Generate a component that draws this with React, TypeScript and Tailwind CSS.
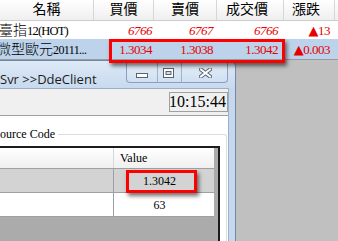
export default function App() {
  const red = "text-[#e60000]";
  return (
    <div className="relative flex h-[241px] w-[338px] flex-col overflow-hidden bg-[#c0c0c0] font-['Liberation_Serif','Noto_Sans_CJK_TC',serif] text-black">
      {/* quote table */}
      <div className="flex flex-col bg-white">
        <div className="flex h-[21px] border-b border-[#cdcdcd] bg-linear-to-b from-white to-[#efefef] text-[14px] leading-none">
          <div className="flex w-[94px] items-center justify-center border-r border-[#d6d6d6]">名稱</div>
          <div className="flex w-[60px] items-center justify-center border-r border-[#d6d6d6]">買價</div>
          <div className="flex w-[63px] items-center justify-center border-r border-[#d6d6d6]">賣價</div>
          <div className="flex w-[67px] items-center justify-center border-r border-[#d6d6d6] pr-[6px]">成交價</div>
          <div className="flex w-[51px] items-center justify-center border-r border-[#d6d6d6] pr-[6px]">漲跌</div>
          <div className="flex-1" />
        </div>
        <div className="flex h-[18px] items-center bg-white leading-none">
          <div className="ml-[-1px] w-[94px] whitespace-nowrap">
            <span className="text-[14px] font-light">臺指</span>
            <span className="text-[12.5px] tracking-[-0.8px]">12(HOT)</span>
          </div>
          <div className={`w-[59px] text-right text-[13px] italic tracking-[-0.5px] ${red}`}>6766</div>
          <div className={`w-[61px] text-right text-[13px] italic tracking-[-0.5px] ${red}`}>6767</div>
          <div className={`w-[65px] text-right text-[13px] italic tracking-[-0.5px] ${red}`}>6766</div>
          <div className={`flex w-[52px] items-center justify-end text-[13px] tracking-[-0.5px] ${red}`}>
            <span className="font-['DejaVu_Sans'] text-[13px]">▲</span>
            <span>13</span>
          </div>
          <div className="flex-1" />
        </div>
        <div className="flex h-[20px] items-center bg-[#bcd3eb] leading-none">
          <div className="ml-[-3px] w-[96px] whitespace-nowrap">
            <span className="text-[14px] font-light">微型歐元</span>
            <span className="text-[12px] tracking-[-0.6px]">20111...</span>
          </div>
          <div className={`w-[59px] text-right text-[13px] tracking-[-0.5px] ${red}`}>1.3034</div>
          <div className={`w-[61px] text-right text-[13px] tracking-[-0.5px] ${red}`}>1.3038</div>
          <div className={`w-[65px] text-right text-[13px] tracking-[-0.5px] ${red}`}>1.3042</div>
          <div className={`flex w-[52px] items-center justify-end text-[13px] tracking-[-0.5px] ${red}`}>
            <span className="font-['DejaVu_Sans'] text-[13px]">▲</span>
            <span>0.003</span>
          </div>
          <div className="flex-1" />
        </div>
        <div className="h-px bg-[#9a9a9a]" />
      </div>

      {/* window on desktop */}
      <div className="flex min-h-0 flex-1">
        <div className="flex w-[236px] flex-col overflow-hidden rounded-tr-[7px] border-r border-t border-[#7189a7] bg-[#c5d8ee]">
          <div className="flex h-[27px] items-start bg-linear-to-b from-[#dde9f6] to-[#c8daef]">
            <div className="flex-1 whitespace-nowrap pt-[10px] font-['Open_Sans'] text-[13px] leading-[16px] text-[#1b1b1b]">
              Svr &gt;&gt;DdeClient
            </div>
            <div className="mr-[7px] flex h-[22px] overflow-hidden rounded-b-[4px] border border-t-0 border-[#8aa0bc] bg-linear-to-b from-[#e6eef8] to-[#cfe0f2]">
              <div className="flex w-[30px] justify-center pt-[12px]">
                <svg width="12" height="6" viewBox="0 0 12 6">
                  <rect x="0.5" y="0.5" width="11" height="4" fill="#fff" stroke="#59636f" />
                </svg>
              </div>
              <div className="flex w-[24px] justify-center border-l border-[#9fb3cc] pt-[7px] pr-[2px]">
                <svg width="11" height="10" viewBox="0 0 11 10">
                  <rect x="0.5" y="0.5" width="10" height="9" fill="#fff" stroke="#59636f" />
                  <rect x="3" y="3.5" width="5" height="3" fill="#d4dde8" stroke="#59636f" />
                </svg>
              </div>
              <div className="flex w-[46px] justify-center border-l border-[#9fb3cc] pt-[7px] pl-[2px]">
                <svg width="13" height="10" viewBox="0 0 13 10">
                  <path d="M2 1.5 L11 8.5 M11 1.5 L2 8.5" stroke="#59636f" strokeWidth="4" strokeLinecap="square" />
                  <path d="M2 1.5 L11 8.5 M11 1.5 L2 8.5" stroke="#fff" strokeWidth="2" strokeLinecap="square" />
                </svg>
              </div>
            </div>
          </div>
          <div className="flex min-h-0 flex-1">
            <div className="flex w-[229px] flex-col border-r border-t border-[#9db0c7]">
              <div className="flex h-[27px] items-start justify-end border-b border-[#a0a0a0] bg-[#f0f0f0] pt-[3px]">
                <div className="flex h-[20px] w-[59px] items-center justify-end border border-[#a0a0a0] pr-[1px] text-[16px] leading-none">
                  10:15:44
                </div>
              </div>
              <div className="flex min-h-0 flex-1 flex-col bg-white pt-[18px]">
                <div className="relative mr-[1px] flex min-h-0 flex-1 flex-col rounded-tr-[3px] border-r border-t border-[#d5dfe5]">
                  <div className="absolute left-0 top-[-8px] whitespace-nowrap bg-white pr-[3px] text-[12px] leading-[14px]">
                    ource Code
                  </div>
                  <div className="mr-[6px] mt-[11px] flex min-h-0 flex-1 flex-col border-r-2 border-t-2 border-[#1c1c1c] bg-[#ababab] text-[12px] leading-none">
                    <div className="flex h-[21px] w-fit border-b border-[#a0a0a0] bg-linear-to-b from-white to-[#f0f0f0]">
                      <div className="w-[114px] border-r border-[#d8d8d8]" />
                      <div className="flex w-[100px] items-center pl-[6px]">Value</div>
                    </div>
                    <div className="flex h-[24px] w-fit border-b border-[#a0a0a0] bg-[#d3d3d3]">
                      <div className="w-[114px] border-r border-[#a0a0a0]" />
                      <div className="relative flex w-[100px] items-center justify-center pr-[9px]">
                        1.3042
                        <div className="absolute left-[12px] top-[1px] h-[23px] w-[71px] border-[3px] border-[#ff0000] shadow-[2px_3px_4px_rgba(0,0,0,0.55)]" />
                      </div>
                    </div>
                    <div className="flex h-[24px] w-fit border-b border-[#a0a0a0] bg-white">
                      <div className="w-[114px] border-r border-[#a0a0a0]" />
                      <div className="flex w-[100px] items-center justify-center pr-[9px]">63</div>
                    </div>
                  </div>
                </div>
              </div>
            </div>
          </div>
        </div>
        <div className="flex-1" />
      </div>

      {/* annotation box over quote row */}
      <div className="absolute left-[109px] top-[39px] h-[24px] w-[176px] border-[3px] border-[#ff0000] shadow-[2px_3px_4px_rgba(0,0,0,0.55)]" />
    </div>
  );
}
